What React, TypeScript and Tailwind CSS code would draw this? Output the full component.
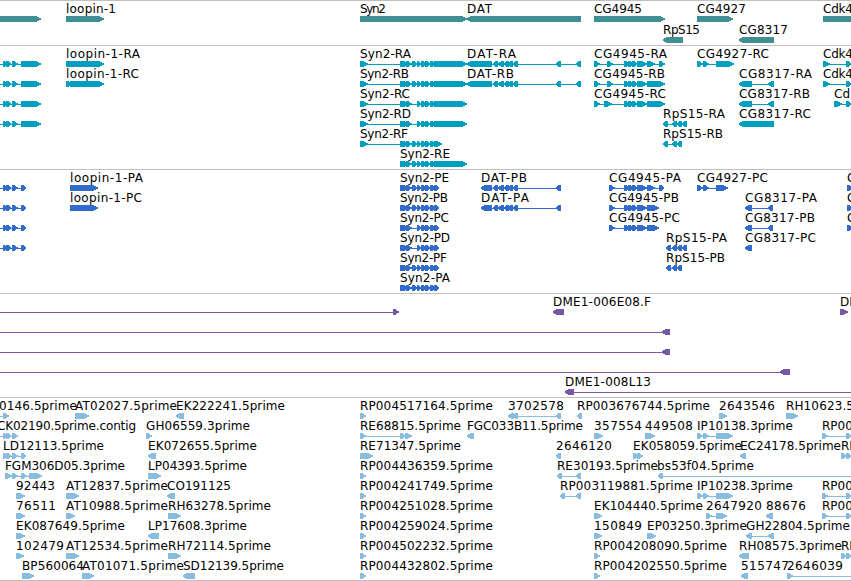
type Exon = [number, number];

interface Feature {
  row: number;
  label?: string;
  x?: number;
  end?: number; // right edge of the label, natural width when missing
  rev?: boolean;
  exons: Exon[];
  line?: Exon;
}

interface Track {
  id: string;
  color: string;
  pitch: number;
  className: string;
  features: Feature[];
}

const WIDTH = 851;

const fwd = (row: number, label: string, x: number, end: number | undefined, exons: Exon[], line?: Exon): Feature => ({
  row, label, x, end, exons, line,
});
const rev = (row: number, label: string, x: number, end: number | undefined, exons: Exon[], line?: Exon): Feature => ({
  row, label, x, end, exons, line, rev: true,
});

// Exon runs shared by several transcripts
const leftRna: Exon[] = [[3, 7], [6, 11], [12, 18], [21, 41]];
const leftCds: Exon[] = [[3, 7], [6, 11], [12, 18], [21, 26]];
const synA: Exon[] = [[400, 404], [402, 407], [406, 412]];
const synB: Exon[] = [[417, 421], [421, 426], [425, 430], [430, 435]];
const datMid: Exon[] = [[492, 498], [497, 504], [503, 509], [507, 513], [512, 518]];
const cgMid: Exon[] = [[624, 629], [628, 633], [632, 637], [637, 647]];
const ipRun: Exon[] = [[697, 703], [703, 709], [716, 721], [719, 733]];
const rpRun: Exon[] = [[822, 828], [846, 851]];

const genes: Feature[] = [
  { row: 0, exons: [[-10, 41]] },
  fwd(0, 'loopin-1', 66, 116, [[66, 104]]),
  fwd(0, 'Syn2', 360, 386, [[360, 467]]),
  rev(0, 'DAT', 467, 492, [[466, 581]]),
  fwd(0, 'CG4945', 594, 642, [[594, 665]]),
  rev(1, 'RpS15', 663, 700, [[662, 683]]),
  fwd(0, 'CG4927', 697, 746, [[697, 733]]),
  rev(1, 'CG8317', 739, 788, [[738, 774]]),
  fwd(0, 'Cdk4', 823, 853, [[823, 870]]),
];

const transcripts: Feature[] = [
  ...[0, 1, 2, 3].map((row): Feature => ({ row, exons: leftRna, line: [0, 40] })),
  fwd(0, 'loopin-1-RA', 66, 140, [[66, 104]]),
  fwd(1, 'loopin-1-RC', 66, 139, [[66, 71], [70, 104]]),
  fwd(0, 'Syn2-RA', 360, 411, [[360, 368], ...synA, [412, 418], ...synB, [434, 467]]),
  fwd(1, 'Syn2-RB', 360, 409, [[360, 368], ...synA, [412, 418], ...synB, [434, 467]]),
  fwd(2, 'Syn2-RC', 360, 410, [[360, 368], ...synA, ...synB, [434, 467]]),
  fwd(3, 'Syn2-RD', 360, 411, [[360, 368], ...synA, ...synB, [434, 467]]),
  fwd(4, 'Syn2-RF', 360, 408, [[360, 368], ...synA, [412, 418], ...synB, [434, 442]]),
  fwd(5, 'Syn2-RE', 400, 450, [...synA, [412, 418], ...synB, [434, 467]]),
  rev(0, 'DAT-RA', 467, 516, [[466, 492], ...datMid, [555, 561], [575, 581]]),
  rev(1, 'DAT-RB', 467, 514, [[466, 492], ...datMid, [555, 561], [575, 581]]),
  fwd(0, 'CG4945-RA', 594, 667, [[594, 600], [607, 613], ...cgMid, [647, 655], [659, 665]]),
  fwd(1, 'CG4945-RB', 594, 665, [[594, 600], [607, 613], ...cgMid, [647, 665]]),
  fwd(2, 'CG4945-RC', 594, 666, [[594, 600], [604, 612], ...cgMid, [647, 665]]),
  fwd(0, 'CG4927-RC', 697, 769, [[697, 703], [703, 709], [716, 734]]),
  rev(3, 'RpS15-RA', 663, 725, [[662, 668], [671, 677], [676, 682], [681, 687]]),
  rev(4, 'RpS15-RB', 663, 723, [[662, 668], [671, 677], [676, 682]]),
  rev(1, 'CG8317-RA', 739, 812, [[738, 752], [767, 774]]),
  rev(2, 'CG8317-RB', 739, 810, [[738, 752], [767, 774]]),
  rev(3, 'CG8317-RC', 739, 811, [[738, 774]]),
  fwd(0, 'Cdk4', 823, 853, [[823, 830], [846, 852]]),
  fwd(1, 'Cdk4', 823, 853, [[823, 830], [846, 852]]),
  fwd(2, 'Cd', 834, 850, [[834, 842], [846, 852]]),
];

const proteins: Feature[] = [
  ...[0, 1, 2, 3].map((row): Feature => ({ row, exons: leftCds, line: [0, 26] })),
  fwd(0, 'loopin-1-PA', 70, 143, [[70, 98]]),
  fwd(1, 'loopin-1-PC', 70, 142, [[70, 98]]),
  ...['PE', 'PB', 'PC', 'PD', 'PF', 'PA'].map((name, row) =>
    fwd(
      row,
      `Syn2-${name}`,
      400,
      [449, 448, 449, 450, 447, 450][row],
      row === 2 || row === 3
        ? [...synA, ...synB, [434, 439]]
        : [...synA, [412, 418], ...synB, [434, 439]],
    ),
  ),
  rev(0, 'DAT-PB', 481, 527, [[480, 492], ...datMid, [555, 561]]),
  rev(1, 'DAT-PA', 481, 529, [[480, 492], ...datMid, [555, 561]]),
  fwd(0, 'CG4945-PA', 609, 681, [[609, 615], ...cgMid, [647, 655], [659, 664]]),
  fwd(1, 'CG4945-PB', 609, 679, [[609, 615], ...cgMid, [647, 659]]),
  fwd(2, 'CG4945-PC', 609, 680, [[609, 615], ...cgMid, [647, 659]]),
  fwd(0, 'CG4927-PC', 697, 768, [[697, 703], [703, 709], [716, 728]]),
  rev(3, 'RpS15-PA', 666, 727, [[665, 671], [671, 677], [676, 682], [681, 687]]),
  rev(4, 'RpS15-PB', 666, 725, [[665, 671], [671, 677], [676, 682]]),
  rev(1, 'CG8317-PA', 745, 817, [[744, 752], [767, 773]]),
  rev(2, 'CG8317-PB', 745, 815, [[744, 752], [767, 773]]),
  rev(3, 'CG8317-PC', 745, 816, [[744, 752]]),
  ...[0, 1, 2].map((row) => fwd(row, 'C', 847, undefined, [[847, 853]])),
];

const clones: Feature[] = [
  { row: 0, exons: [[393, 399]], line: [0, 394] },
  { row: 1, rev: true, exons: [[661, 670]], line: [0, 662] },
  { row: 2, rev: true, exons: [[661, 670]], line: [0, 662] },
  { row: 3, rev: true, exons: [[779, 790]], line: [0, 780] },
  rev(0, 'DME1-006E08.F', 553, 651, [[552, 564]]),
  fwd(0, 'DM', 840, undefined, [[840, 848]]),
  rev(4, 'DME1-008L13', 565, 651, [[564, 574]], [565, WIDTH]),
];

const ests: Feature[] = [
  fwd(0, '0146.5prime', -1, 77, [[3, 9]], [0, 8]),
  fwd(0, 'AT02027.5prime', 75, 177, [[75, 89]]),
  rev(0, 'EK222241.5prime', 176, 285, [[175, 184]]),
  rev(0, '3702578', 508, 564, [[507, 514], [511, 518], [555, 561]]),
  rev(0, 'RP003676744.5prime', 577, 710, [[576, 582]]),
  fwd(0, '2643546', 719, 775, [[719, 727]]),
  fwd(0, 'RH10623.5', 786, 854, [[786, 798]]),

  fwd(1, 'CK02190.5prime.contig', -3, 136, [[3, 7], [6, 11], [12, 18]], [0, 17]),
  fwd(1, 'GH06559.3prime', 146, 250, [[146, 152]]),
  fwd(1, 'RE68815.5prime', 360, 461, [[360, 366], [400, 406], [405, 412]]),
  rev(1, 'FGC033B11.5prime', 467, 583, [[466, 474]]),
  fwd(1, '357554', 594, 642, [[594, 603]]),
  fwd(1, '449508', 645, 693, [[645, 651], [648, 655]]),
  fwd(1, 'IP10138.3prime', 697, 793, ipRun),
  fwd(1, 'RP00', 822, undefined, rpRun),

  fwd(2, 'LD12113.5prime', 3, 104, leftCds),
  rev(2, 'EK072655.5prime', 148, 257, [[147, 156]]),
  fwd(2, 'RE71347.5prime', 360, 461, [[360, 373]]),
  rev(2, '2646120', 556, 612, [[555, 561]]),
  fwd(2, 'EK058059.5prime', 633, 742, [[633, 639], [637, 643]]),
  rev(2, 'EC24178.5prime', 740, 841, [[739, 746]]),
  fwd(2, 'RE', 841, undefined, [[841, 847], [846, 852]]),

  fwd(3, 'FGM306D05.3prime', 5, 125, [[5, 12], [12, 18], [21, 27], [29, 42]]),
  fwd(3, 'LP04393.5prime', 148, 247, [[148, 161]]),
  rev(3, 'RE30193.5prime', 557, 658, [[556, 562], [575, 581]]),
  rev(3, 'bs53f04.5prime', 657, 754, [[657, 663]], [658, WIDTH]),

  fwd(4, '92443', 16, 55, [[16, 25]]),
  fwd(4, 'AT12837.5prime', 66, 168, [[66, 79]]),
  rev(4, 'CO191125', 167, 231, [[166, 175]]),
  rev(4, 'RP003119881.5prime', 560, 693, [[559, 565], [575, 581]]),
  fwd(4, 'IP10238.3prime', 697, 793, ipRun),
  fwd(4, 'RP00', 822, undefined, rpRun),

  fwd(5, '76511', 16, 56, [[16, 25]]),
  fwd(5, 'AT10988.5prime', 66, 168, [[66, 75]]),
  fwd(5, 'RH63278.5prime', 168, 271, [[168, 181]]),
  fwd(5, 'EK104440.5prime', 594, 703, [[594, 602]]),
  fwd(5, '2647920', 706, 762, [[706, 712], [716, 727]]),
  rev(5, '88676', 766, 806, [[765, 773]]),
  fwd(5, 'RP00', 822, undefined, rpRun),

  fwd(6, 'EK087649.5prime', 16, 125, [[16, 25]]),
  rev(6, 'LP17608.3prime', 148, 247, [[147, 159]]),
  fwd(6, '150849', 594, 642, [[594, 602]]),
  fwd(6, 'EP03250.3prime', 647, 747, [[647, 656]]),
  rev(6, 'GH22804.5prime', 746, 850, [[745, 752], [767, 774]]),

  fwd(7, '102479', 16, 64, [[16, 24]]),
  fwd(7, 'AT12534.5prime', 66, 168, [[66, 79]]),
  fwd(7, 'RH72114.5prime', 168, 271, [[168, 181]]),
  fwd(7, 'RP004208090.5prime', 594, 727, [[594, 600]]),
  rev(7, 'RH08575.3prime', 739, 842, [[738, 749]]),
  fwd(7, 'RE', 841, undefined, [[841, 847], [846, 852]]),

  fwd(8, 'BP560064', 22, 84, [[22, 34]]),
  fwd(8, 'AT01071.5prime', 82, 184, [[82, 94]]),
  rev(8, 'SD12139.5prime', 183, 284, [[182, 195]]),
  fwd(8, 'RP004202550.5prime', 594, 727, [[594, 600]]),
  rev(8, '515747', 741, 789, [[740, 748]]),
  fwd(8, '2646039', 787, 843, [[787, 793]], [787, WIDTH]),

  // 5' reads stacked on the Syn2 start
  ...([
    [0, 'RP004517164.5prime'],
    [3, 'RP004436359.5prime'],
    [4, 'RP004241749.5prime'],
    [5, 'RP004251028.5prime'],
    [6, 'RP004259024.5prime'],
    [7, 'RP004502232.5prime'],
    [8, 'RP004432802.5prime'],
  ] as [number, string][]).map(([row, label]) => fwd(row, label, 360, 493, [[360, 366]])),
];

const tracks: Track[] = [
  { id: 'gene', color: '#408f95', pitch: 21, className: 'h-[45px]', features: genes },
  { id: 'mrna', color: '#009fc0', pitch: 20, className: 'h-[124px]', features: transcripts },
  { id: 'cds', color: '#316ccd', pitch: 20, className: 'h-[124px]', features: proteins },
  { id: 'clone', color: '#7658a6', pitch: 20, className: 'h-[104px]', features: clones },
  { id: 'est', color: '#88bddf', pitch: 20, className: 'h-[183px]', features: ests },
];

// Bar with a blunt tapered head; short bars collapse into an arrowhead
function exonPoints([a, b]: Exon, top: number, reversed?: boolean) {
  const head = Math.min(b - a - 1, 6);
  const bottom = top + 6;
  const tip = reversed ? a : b;
  const back = reversed ? b : a;
  const step = reversed ? 1 : -1;
  const neck = tip + step * head;
  const nose = tip + step;
  return [
    [back, top],
    [neck, top],
    [neck - step, top],
    [nose, top + 2],
    [tip, top + 3],
    [nose, top + 4],
    [neck - step, bottom],
    [back, bottom],
  ].map((p) => p.join(',')).join(' ');
}

function FeatureGlyph({ feature, pitch }: { feature: Feature; pitch: number }) {
  const { row, label, x, end, exons, line } = feature;
  const y = row * pitch;
  const [from, to] = line ?? [exons[0][0] + 1, exons[exons.length - 1][1] - 1];

  return (
    <g>
      {(line || exons.length > 1) && <rect x={from} y={y + 18} width={to - from} height={1} />}
      {exons.map((exon) => (
        <polygon key={exon[0]} points={exonPoints(exon, y + 15, feature.rev)} />
      ))}
      {label && x !== undefined && (
        <text x={x} y={y + 12} textLength={end === undefined ? undefined : end - x} className="fill-black">
          {label}
        </text>
      )}
    </g>
  );
}

function TrackRow({ track }: { track: Track }) {
  return (
    <section className={`w-full overflow-hidden border-t border-[#c0c0c0] ${track.className}`}>
      <svg width={WIDTH} height="100%" fill={track.color} shapeRendering="crispEdges" className="block">
        {track.features.map((feature, i) => (
          <FeatureGlyph key={i} feature={feature} pitch={track.pitch} />
        ))}
      </svg>
    </section>
  );
}

export default function App() {
  return (
    <main className="flex h-[581px] w-[851px] flex-col overflow-hidden border-b border-[#c0c0c0] bg-white font-['DejaVu_Sans',sans-serif] text-[12px]">
      {tracks.map((track) => (
        <TrackRow key={track.id} track={track} />
      ))}
    </main>
  );
}
